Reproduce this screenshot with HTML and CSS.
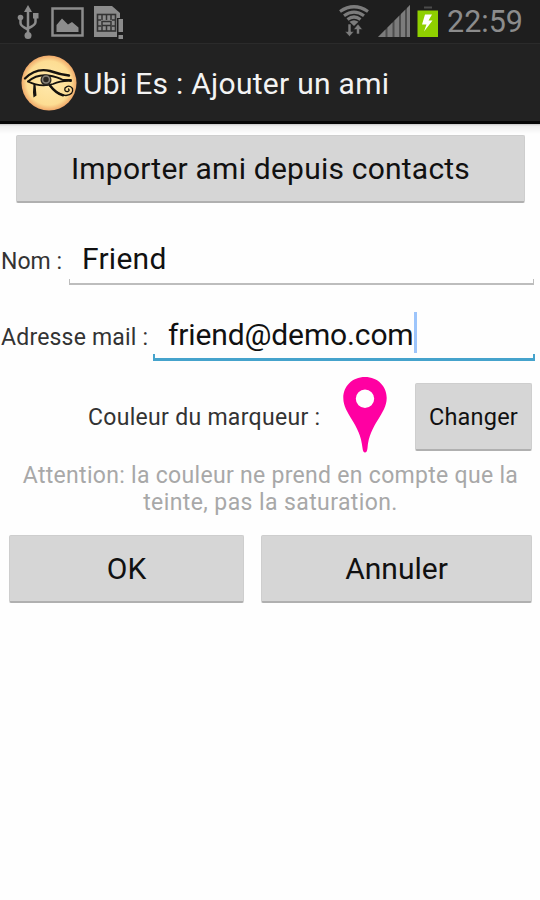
FILE: index.html
```html
<!DOCTYPE html>
<html lang="fr">
<head>
  <meta charset="UTF-8" />
  <meta name="viewport" content="width=device-width, initial-scale=1.0" />
  <title>Ubi Es : Ajouter un ami</title>
  <link rel="stylesheet" href="styles.css">
</head>
<body>
  <!-- barre d'état -->
  <div class="status-bar">
    <svg class="status-left" width="130" height="43" viewBox="0 0 130 43" fill="#8c8c8c">
      <g stroke="#8c8c8c" stroke-width="2.5" fill="none">
        <path d="M28 10V35M20.500 19V23Q20.500 26 28 29.500M35.500 17V22Q35.500 25 28 28.500" />
      </g>
      <path d="M28 5L32 12H24Z" />
      <circle cx="20.500" cy="17.500" r="2.800" />
      <rect x="33" y="13" width="5.500" height="5.500" />
      <circle cx="28" cy="35.500" r="3.500" />
      <rect x="52.500" y="8.500" width="30" height="27" fill="none" stroke="#8c8c8c" stroke-width="2.500" />
      <path d="M56.500 32V25L62 18.500L68 24.500L72 22L78.500 27.500V32Z" />
      <path d="M94 6H112L120 13V37H94Z" />
      <rect x="97.500" y="14.500" width="18" height="16.500" fill="none" stroke="#333" stroke-width="1.600" />
      <path d="M102 15V20M106.500 15V20M111 15V20M102 26V31M106.500 26V31M111 26V31" stroke="#333" stroke-width="1.500" />
      <path d="M98 20H101M112 20H115M98 26H101M112 26H115" stroke="#333" stroke-width="1.300" />
      <rect x="102" y="21.500" width="9" height="4" fill="none" stroke="#333" stroke-width="1.500" />
      <path d="M117 18H125V40H117Z" fill="#1e1e1e" />
      <path d="M118.500 19H123V32H118.500ZM118.500 35H123V39H118.500Z" />
    </svg>
    <svg width="102" height="43" viewBox="338 0 102 43" fill="#7c7c7c">
      <g fill="none" stroke="#7c7c7c" stroke-width="3.200">
        <path d="M340 11.500Q354 2 368 11.500" />
        <path d="M344 15.800Q354 8.500 364 15.800" />
        <path d="M347.500 19.500Q354 14.500 360.500 19.500" />
      </g>
      <path d="M349.500 21.800Q354 18.500 358.500 21.800L354 26Z" />
      <path d="M348 24H351V31.500H354L349.500 36.500L345 31.500H348ZM356.500 34V29.500H353.500L358 24L362.500 29.500H359.500V34Z" stroke="#202020" stroke-width=".6" />
      <path d="M378 37L410 5V37Z" fill="#4d4d4d" />
      <path d="M378 37L385.500 29.500V37ZM387.500 27.500L392.500 22.500V37H387.500ZM394.500 20.500L399 16V37H394.500ZM401 14L405 10V37H401ZM407 8L410 5V37H407Z" />
      <rect x="424" y="6.500" width="8" height="2" fill="#4b4b4b" />
      <rect x="417.500" y="10.500" width="20.500" height="26.500" fill="#8fd000" />
      <path d="M425 14.500H432L428.500 20.500H432.500L424 31.500L426.500 24.500H422Z" fill="#fff" />
    </svg>
    <span class="clock">22:59</span>
  </div>

  <!-- barre de titre -->
  <div class="action-bar">
    <svg class="logo" width="58" height="58" viewBox="20 54.500 58 58">
      <defs>
        <radialGradient id="gold">
          <stop offset="0" stop-color="#ffe9ac" />
          <stop offset=".8" stop-color="#fddd93" />
          <stop offset="1" stop-color="#f0a96a" />
        </radialGradient>
      </defs>
      <circle cx="49" cy="83.500" r="27.500" fill="url(#gold)" />
      <g fill="none" stroke="#15120e" stroke-linecap="round">
        <path d="M25 79Q36 68 50 71.500Q60 75 69 76" stroke-width="2.400" />
        <path d="M28 82Q37 74.500 48 76Q58 77.500 63 80.500H71" stroke-width="1.800" />
        <path d="M28 82Q40 88 53 84.500Q61 81 71 81.500" stroke-width="1.800" />
        <path d="M50 86Q58 96 66 96Q74 95 72.500 89Q69 84.500 65 88.500Q64 92.500 68 92Q70 91 68.500 89.500" stroke-width="1.300" />
        <path d="M50 86Q56 94 63 95.800" stroke-width="2.500" />
      </g>
      <circle cx="46" cy="80.500" r="5.500" fill="#2b2823" />
      <circle cx="46" cy="80" r="3.500" fill="none" stroke="#858078" stroke-width="1.600" />
      <path d="M33.500 84L35.500 85L36.500 96L33.500 98L33 93Z" fill="#15120e" />
    </svg>
    <h1>Ubi Es : Ajouter un ami</h1>
  </div>

  <div class="content">
    <button class="btn import">Importer ami depuis contacts</button>

    <div class="row name-row">
      <label>Nom :</label>
      <div class="field"><span class="name-text">Friend</span></div>
    </div>
    <div class="row mail-row">
      <label>Adresse mail :</label>
      <div class="field focused"><span class="mail-text">friend@demo.com</span><i class="caret"></i></div>
    </div>

    <div class="marker-row">
      <span class="marker-label">Couleur du marqueur :</span>
      <svg class="marker" width="44" height="76" viewBox="0 0 44 76">
        <path fill="#ff00a2" fill-rule="evenodd" d="M22 0C9 0 .3 9.500 .3 21C.3 37 17.500 47 19.500 71Q20 75.500 22 75.500Q24 75.500 24.500 71C26.500 47 43.700 37 43.700 21C43.700 9.500 35 0 22 0ZM22 12.500A9.200 9.200 0 1 1 22 30.900A9.200 9.200 0 1 1 22 12.500Z" />
      </svg>
      <button class="btn change">Changer</button>
    </div>

    <p class="hint"><span class="line1">Attention: la couleur ne prend en compte que la</span><br><span class="line2">teinte, pas la saturation.</span></p>

    <div class="actions">
      <button class="btn ok">OK</button>
      <button class="btn cancel">Annuler</button>
    </div>
  </div>
</body>
</html>
```
FILE: styles.css
```css
body {
  margin: 0;
  height: 900px;
  overflow: hidden;
  background: #fefefe;
  color: #111;
  font-family: Roboto, sans-serif;
}
svg {
  display: block;
  flex: none;
}
.status-bar {
  display: flex;
  height: 43px;
  background: #1e1e1e;
}
.status-left {
  margin-right: 208px;
}
.clock {
  margin-left: 7px;
  font-size: 30.5px;
  line-height: 44px;
  color: #8c8c8c;
  white-space: nowrap;
}
.action-bar {
  display: flex;
  align-items: center;
  box-sizing: border-box;
  height: 81px;
  padding-left: 20px;
  background: #222;
  border-top: 1px solid #2b2b2b;
  border-bottom: 3px solid #050505;
}
h1 {
  margin: 3px 0 0 5px;
  font-size: 30px;
  font-weight: 400;
  line-height: 40px;
  letter-spacing: 0.28px;
  color: #f3f3f3;
  white-space: nowrap;
}
.content {
  padding-top: 11px;
  background: linear-gradient(#c4c4c4, #eee 2px, #fefefe 10px) no-repeat;
}
.btn {
  display: block;
  box-sizing: border-box;
  height: 68px;
  margin: 0;
  padding: 0;
  border: 1px solid #cecece;
  border-bottom: 2px solid #b0b0b0;
  border-radius: 2px;
  background: #d6d6d6;
  color: #111;
  font-family: inherit;
  font-size: 30px;
  white-space: nowrap;
}
.import {
  width: 509px;
  margin-left: 16px;
  letter-spacing: 0.22px;
}
.row {
  display: flex;
  align-items: flex-start;
  padding-left: 1px;
}
label,
.marker-label {
  color: #333;
  font-size: 23px;
  white-space: nowrap;
}
.name-row,
.mail-row {
  box-sizing: border-box;
  height: 76px;
  padding-top: 33px;
}
.row label {
  flex: none;
  width: 68px;
  padding-top: 10px;
  line-height: 32px;
}
.mail-row label {
  width: 152px;
  letter-spacing: 0.2px;
}
.field {
  position: relative;
  display: flex;
  flex: 1;
  box-sizing: border-box;
  height: 49px;
  margin-right: 6px;
  padding-left: 13px;
  border-bottom: 2px solid #bdbdbd;
  font-size: 30px;
  line-height: 46px;
}
/* petits retours verticaux aux extrémités du trait */
.field::before,
.field::after {
  content: "";
  position: absolute;
  bottom: 0;
  width: 1px;
  height: 4px;
  background: #bdbdbd;
}
.field::before {
  left: 0;
}
.field::after {
  right: 0;
}
.name-text {
  letter-spacing: 0.25px;
}
.mail-text {
  letter-spacing: -0.13px;
}
.focused {
  margin-right: 5px;
  padding-left: 15px;
  border-bottom: 3px solid #45a3cc;
}
.focused::before,
.focused::after {
  width: 2px;
  background: #45a3cc;
}
.caret {
  width: 3px;
  height: 41px;
  background: #9dc5fb;
}
.marker-row {
  display: flex;
  margin-top: 22px;
  padding-left: 88px;
}
.marker-label {
  width: 255px;
  padding-top: 16px;
  line-height: 50px;
  letter-spacing: 0.3px;
}
.marker {
  margin-right: 28px;
}
.change {
  width: 117px;
  margin-top: 6px;
  font-size: 23.5px;
  letter-spacing: 0.2px;
}
.hint {
  margin: 9px 0 0 1px;
  color: #a8a8a8;
  font-size: 23px;
  line-height: 27px;
  text-align: center;
  white-space: nowrap;
}
.line1 {
  letter-spacing: 0.3px;
}
.line2 {
  letter-spacing: 0.4px;
}
.actions {
  display: flex;
  gap: 17px;
  margin-top: 19px;
  padding-left: 9px;
}
.ok {
  width: 235px;
}
.cancel {
  width: 271px;
}
```
